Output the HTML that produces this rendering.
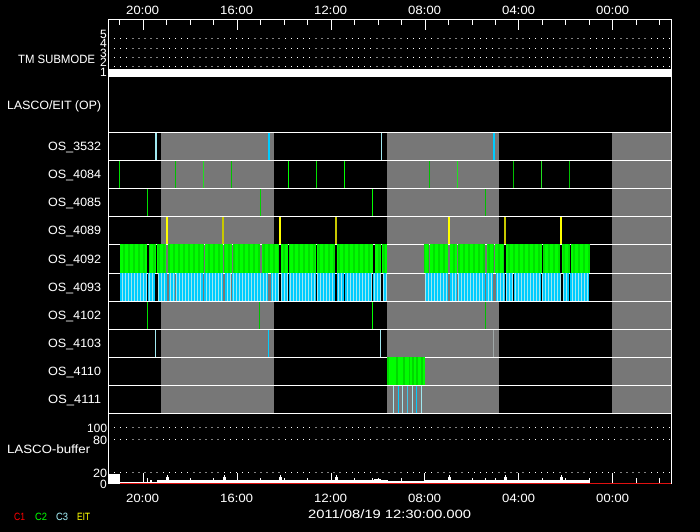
<!DOCTYPE html>
<html><head><meta charset="utf-8"><style>
html,body{margin:0;padding:0;background:#000;width:700px;height:532px;overflow:hidden}
svg{display:block}
text{font-family:"Liberation Sans",sans-serif;font-size:12px;fill:#fff}
</style></head><body>
<svg width="700" height="532" viewBox="0 0 700 532" shape-rendering="crispEdges">
<defs>
<pattern id="g" width="5" height="10" patternUnits="userSpaceOnUse"><rect width="5" height="10" fill="#00ff00"/><rect x="3" width="2" height="10" fill="#00e000"/></pattern>
<pattern id="c" width="3" height="10" patternUnits="userSpaceOnUse"><rect width="3" height="10" fill="#00ccff"/><rect x="2" width="1" height="10" fill="#a0e8f0"/></pattern>
</defs>
<rect width="700" height="532" fill="#000"/>

<!-- gray bands -->
<g fill="#777">
<rect x="161" y="133" width="113" height="280"/>
<rect x="387" y="133" width="112" height="280"/>
<rect x="612" y="133" width="59" height="280"/>
</g>

<!-- row lines -->
<g fill="#fff">
<rect x="108" y="132" width="564" height="1"/>
<rect x="108" y="160" width="564" height="1"/>
<rect x="108" y="188" width="564" height="1"/>
<rect x="108" y="216" width="564" height="1"/>
<rect x="108" y="244" width="564" height="1"/>
<rect x="108" y="273" width="564" height="1"/>
<rect x="108" y="301" width="564" height="1"/>
<rect x="108" y="329" width="564" height="1"/>
<rect x="108" y="357" width="564" height="1"/>
<rect x="108" y="385" width="564" height="1"/>
<rect x="108" y="413" width="564" height="1"/>
<rect x="109" y="69" width="562" height="8"/>
</g>

<!-- OS_3532 -->
<rect x="155" y="133" width="2" height="27" fill="#a0e8f0"/>
<rect x="268" y="133" width="2" height="27" fill="#00ccff"/>
<rect x="381" y="133" width="1" height="27" fill="#a0e8f0"/>
<rect x="493" y="133" width="2" height="27" fill="#00ccff"/>

<!-- OS_4084 -->
<g fill="#00e000">
<rect x="119" y="161" width="1" height="27"/>
<rect x="175" y="161" width="1" height="27" fill="#00c000"/>
<rect x="203" y="161" width="1" height="27" fill="#20e020"/>
<rect x="231" y="161" width="1" height="27" fill="#00c000"/>
<rect x="288" y="161" width="1" height="27" fill="#00ff00"/>
<rect x="316" y="161" width="1" height="27"/>
<rect x="344" y="161" width="1" height="27" fill="#00ff00"/>
<rect x="429" y="161" width="1" height="27" fill="#00c000"/>
<rect x="457" y="161" width="1" height="27" fill="#20e020"/>
<rect x="513" y="161" width="1" height="27" fill="#00c000"/>
<rect x="541" y="161" width="1" height="27" fill="#20e020"/>
<rect x="569" y="161" width="1" height="27" fill="#00c000"/>
</g>

<!-- OS_4085 -->
<g fill="#00e000">
<rect x="147" y="189" width="1" height="27"/>
<rect x="260" y="189" width="1" height="27" fill="#00d000"/>
<rect x="372" y="189" width="1" height="27" fill="#00ff00"/>
<rect x="485" y="189" width="1" height="27" fill="#00c000"/>
</g>

<!-- OS_4089 -->
<rect x="166" y="217" width="2" height="27" fill="#ffff00"/>
<rect x="222" y="217" width="2" height="27" fill="#c8c800"/>
<rect x="279" y="217" width="2" height="27" fill="#ffff00"/>
<rect x="335" y="217" width="2" height="27" fill="#c8c800"/>
<rect x="448" y="217" width="2" height="27" fill="#ffff00"/>
<rect x="504" y="217" width="2" height="27" fill="#c8c800"/>
<rect x="560" y="217" width="2" height="27" fill="#ffff00"/>

<!-- OS_4092 -->
<g fill="url(#g)">
<rect x="120" y="244" width="27" height="29"/><rect x="149" y="244" width="7" height="29"/><rect x="157" y="244" width="9" height="29"/><rect x="168" y="244" width="36" height="29"/><rect x="205" y="244" width="18" height="29"/><rect x="224" y="244" width="8" height="29"/><rect x="233" y="244" width="27" height="29"/><rect x="262" y="244" width="17" height="29"/><rect x="281" y="244" width="7" height="29"/><rect x="289" y="244" width="27" height="29"/><rect x="317" y="244" width="18" height="29"/><rect x="337" y="244" width="36" height="29"/><rect x="375" y="244" width="6" height="29"/><rect x="382" y="244" width="5" height="29"/>
<rect x="424" y="244" width="5" height="29"/><rect x="430" y="244" width="18" height="29"/><rect x="450" y="244" width="7" height="29"/><rect x="458" y="244" width="27" height="29"/><rect x="487" y="244" width="7" height="29"/><rect x="495" y="244" width="9" height="29"/><rect x="506" y="244" width="36" height="29"/><rect x="543" y="244" width="17" height="29"/><rect x="562" y="244" width="8" height="29"/><rect x="571" y="244" width="19" height="29"/>
</g>

<!-- OS_4093 -->
<g fill="url(#c)">
<rect x="120" y="273" width="27" height="28"/><rect x="148" y="273" width="7" height="28"/><rect x="158" y="273" width="9" height="28"/><rect x="169" y="273" width="6" height="28"/><rect x="176" y="273" width="27" height="28"/><rect x="204" y="273" width="19" height="28"/><rect x="225" y="273" width="6" height="28"/><rect x="232" y="273" width="36" height="28"/><rect x="271" y="273" width="8" height="28"/><rect x="281" y="273" width="7" height="28"/><rect x="289" y="273" width="27" height="28"/><rect x="317" y="273" width="18" height="28"/><rect x="337" y="273" width="7" height="28"/><rect x="345" y="273" width="27" height="28"/><rect x="373" y="273" width="8" height="28"/><rect x="383" y="273" width="4" height="28"/>
<rect x="425" y="273" width="23" height="28"/><rect x="450" y="273" width="7" height="28"/><rect x="458" y="273" width="27" height="28"/><rect x="486" y="273" width="7" height="28"/><rect x="496" y="273" width="9" height="28"/><rect x="506" y="273" width="7" height="28"/><rect x="514" y="273" width="27" height="28"/><rect x="542" y="273" width="19" height="28"/><rect x="563" y="273" width="6" height="28"/><rect x="570" y="273" width="19" height="28"/>
</g>

<!-- OS_4102 -->
<g fill="#00e000">
<rect x="147" y="302" width="1" height="27"/>
<rect x="259" y="302" width="1" height="27" fill="#00c000"/>
<rect x="372" y="302" width="1" height="27" fill="#00ff00"/>
<rect x="485" y="302" width="1" height="27" fill="#00c000"/>
</g>

<!-- OS_4103 -->
<rect x="155" y="330" width="1" height="27" fill="#a0e8f0"/>
<rect x="268" y="330" width="1" height="27" fill="#00ccff"/>
<rect x="380" y="330" width="1" height="27" fill="#a0e8f0"/>
<rect x="493" y="330" width="1" height="27" fill="#a0a8a8"/>

<!-- OS_4110 -->
<rect x="387" y="357" width="38" height="28" fill="#00ff00"/>
<g fill="#00d800">
<rect x="387" y="357" width="2" height="28"/><rect x="396" y="357" width="2" height="28"/><rect x="403" y="357" width="2" height="28"/><rect x="409" y="357" width="1" height="28"/><rect x="412" y="357" width="2" height="28"/><rect x="416" y="357" width="2" height="28"/><rect x="421" y="357" width="2" height="28"/>
</g>

<!-- OS_4111 -->
<rect x="393" y="386" width="1" height="27" fill="#a0e8f0"/>
<rect x="398" y="386" width="1" height="27" fill="#00ccff"/>
<rect x="402" y="386" width="1" height="27" fill="#a0e8f0"/>
<rect x="407" y="386" width="1" height="27" fill="#40c8e8"/>
<rect x="412" y="386" width="1" height="27" fill="#a0e8f0"/>
<rect x="416" y="386" width="1" height="27" fill="#00ccff"/>
<rect x="421" y="386" width="1" height="27" fill="#a0e8f0"/>

<!-- dotted grids -->
<g stroke="#fff" stroke-width="1" stroke-dasharray="1 5.1" fill="none">
<line x1="114" y1="38.5" x2="670" y2="38.5"/>
<line x1="114" y1="48.5" x2="670" y2="48.5"/>
<line x1="114" y1="57.5" x2="670" y2="57.5"/>
<line x1="114" y1="66.5" x2="670" y2="66.5"/>
<line x1="114" y1="427.5" x2="670" y2="427.5"/>
<line x1="114" y1="439.5" x2="670" y2="439.5"/>
<line x1="114" y1="472.5" x2="670" y2="472.5"/>
</g>

<!-- buffer -->
<g fill="#fff">
<rect x="109" y="474" width="11" height="9"/>
<rect x="120" y="482" width="37" height="1"/>
<rect x="157" y="480" width="230" height="3"/>
<rect x="387" y="481" width="38" height="2"/>
<rect x="425" y="480" width="165" height="3"/>
<rect x="374" y="479" width="7" height="4"/><rect x="385" y="480" width="3" height="3"/>
<rect x="166" y="477" width="3" height="6"/><rect x="167" y="475" width="1" height="8"/>
<rect x="223" y="477" width="3" height="6"/><rect x="224" y="475" width="1" height="8"/>
<rect x="279" y="477" width="3" height="6"/><rect x="280" y="475" width="1" height="8"/>
<rect x="335" y="477" width="3" height="6"/><rect x="336" y="475" width="1" height="8"/>
<rect x="448" y="477" width="3" height="6"/><rect x="449" y="475" width="1" height="8"/>
<rect x="504" y="477" width="3" height="6"/><rect x="505" y="475" width="1" height="8"/>
<rect x="560" y="477" width="3" height="6"/><rect x="561" y="475" width="1" height="8"/>
<rect x="147" y="478" width="1" height="5"/><rect x="150" y="480" width="2" height="3"/>
<rect x="260" y="478" width="1" height="5"/><rect x="372" y="478" width="1" height="5"/><rect x="485" y="478" width="1" height="5"/>
</g>
<rect x="120" y="483" width="552" height="1" fill="#e01010"/>
<rect x="108" y="483" width="12" height="1" fill="#fff"/>

<!-- axes -->
<g fill="#fff">
<rect x="108" y="19" width="564" height="1"/>
<rect x="108" y="19" width="1" height="465"/>
<rect x="671" y="19" width="1" height="465"/>
<rect x="143" y="19" width="1" height="11"/><rect x="237" y="19" width="1" height="11"/><rect x="331" y="19" width="1" height="11"/><rect x="425" y="19" width="1" height="11"/><rect x="518" y="19" width="1" height="11"/><rect x="612" y="19" width="1" height="11"/>
<rect x="119" y="19" width="1" height="6"/><rect x="166" y="19" width="1" height="6"/><rect x="190" y="19" width="1" height="6"/><rect x="213" y="19" width="1" height="6"/><rect x="260" y="19" width="1" height="6"/><rect x="284" y="19" width="1" height="6"/><rect x="307" y="19" width="1" height="6"/><rect x="354" y="19" width="1" height="6"/><rect x="378" y="19" width="1" height="6"/><rect x="401" y="19" width="1" height="6"/><rect x="448" y="19" width="1" height="6"/><rect x="472" y="19" width="1" height="6"/><rect x="495" y="19" width="1" height="6"/><rect x="542" y="19" width="1" height="6"/><rect x="565" y="19" width="1" height="6"/><rect x="589" y="19" width="1" height="6"/><rect x="636" y="19" width="1" height="6"/><rect x="659" y="19" width="1" height="6"/>
<rect x="143" y="473" width="1" height="10"/><rect x="237" y="473" width="1" height="10"/><rect x="331" y="473" width="1" height="10"/><rect x="424" y="473" width="1" height="10"/><rect x="518" y="473" width="1" height="10"/><rect x="612" y="473" width="1" height="10"/>
<rect x="119" y="478" width="1" height="5"/><rect x="190" y="478" width="1" height="5"/><rect x="213" y="478" width="1" height="5"/><rect x="284" y="478" width="1" height="5"/><rect x="307" y="478" width="1" height="5"/><rect x="354" y="478" width="1" height="5"/><rect x="378" y="478" width="1" height="5"/><rect x="401" y="478" width="1" height="5"/><rect x="472" y="478" width="1" height="5"/><rect x="495" y="478" width="1" height="5"/><rect x="542" y="478" width="1" height="5"/><rect x="565" y="478" width="1" height="5"/><rect x="589" y="478" width="1" height="5"/><rect x="636" y="478" width="1" height="5"/><rect x="659" y="478" width="1" height="5"/>
</g>

<!-- text -->
<g shape-rendering="auto" text-rendering="geometricPrecision">
<text x="126" y="14" textLength="33" lengthAdjust="spacingAndGlyphs">20:00</text>
<text x="220" y="14" textLength="33" lengthAdjust="spacingAndGlyphs">16:00</text>
<text x="314" y="14" textLength="33" lengthAdjust="spacingAndGlyphs">12:00</text>
<text x="408" y="14" textLength="33" lengthAdjust="spacingAndGlyphs">08:00</text>
<text x="502" y="14" textLength="33" lengthAdjust="spacingAndGlyphs">04:00</text>
<text x="596" y="14" textLength="33" lengthAdjust="spacingAndGlyphs">00:00</text>
<text x="126" y="502" textLength="33" lengthAdjust="spacingAndGlyphs">20:00</text>
<text x="220" y="502" textLength="33" lengthAdjust="spacingAndGlyphs">16:00</text>
<text x="314" y="502" textLength="33" lengthAdjust="spacingAndGlyphs">12:00</text>
<text x="408" y="502" textLength="33" lengthAdjust="spacingAndGlyphs">08:00</text>
<text x="502" y="502" textLength="33" lengthAdjust="spacingAndGlyphs">04:00</text>
<text x="596" y="502" textLength="33" lengthAdjust="spacingAndGlyphs">00:00</text>
<text x="308" y="518" textLength="163" lengthAdjust="spacingAndGlyphs">2011/08/19 12:30:00.000</text>

<text x="18" y="63" textLength="77" lengthAdjust="spacingAndGlyphs">TM SUBMODE</text>
<text x="7" y="109" textLength="94" lengthAdjust="spacingAndGlyphs">LASCO/EIT (OP)</text>
<g style="font-size:11.5px">
<text x="100" y="38">5</text><text x="100" y="47">4</text><text x="100" y="57">3</text><text x="100" y="66">2</text><text x="100" y="76">1</text>
</g>

<text x="48" y="150" textLength="53" lengthAdjust="spacingAndGlyphs">OS_3532</text>
<text x="48" y="178" textLength="53" lengthAdjust="spacingAndGlyphs">OS_4084</text>
<text x="48" y="206" textLength="53" lengthAdjust="spacingAndGlyphs">OS_4085</text>
<text x="48" y="234" textLength="53" lengthAdjust="spacingAndGlyphs">OS_4089</text>
<text x="48" y="263" textLength="53" lengthAdjust="spacingAndGlyphs">OS_4092</text>
<text x="48" y="291" textLength="53" lengthAdjust="spacingAndGlyphs">OS_4093</text>
<text x="48" y="319" textLength="53" lengthAdjust="spacingAndGlyphs">OS_4102</text>
<text x="48" y="347" textLength="53" lengthAdjust="spacingAndGlyphs">OS_4103</text>
<text x="48" y="375" textLength="53" lengthAdjust="spacingAndGlyphs">OS_4110</text>
<text x="48" y="403" textLength="53" lengthAdjust="spacingAndGlyphs">OS_4111</text>

<text x="87" y="432" textLength="20" lengthAdjust="spacingAndGlyphs">100</text>
<text x="93" y="444" textLength="14" lengthAdjust="spacingAndGlyphs">80</text>
<text x="93" y="477" textLength="14" lengthAdjust="spacingAndGlyphs">20</text>
<text x="100" y="488">0</text>
<text x="7" y="453" textLength="83" lengthAdjust="spacingAndGlyphs">LASCO-buffer</text>

<text x="14" y="520" style="font-size:10.5px;fill:#ff0000" textLength="11" lengthAdjust="spacingAndGlyphs">C1</text>
<text x="35" y="520" style="font-size:10.5px;fill:#00ff00" textLength="12" lengthAdjust="spacingAndGlyphs">C2</text>
<text x="56" y="520" style="font-size:10.5px;fill:#a0e8f0" textLength="12" lengthAdjust="spacingAndGlyphs">C3</text>
<text x="77" y="520" style="font-size:10.5px;fill:#ffff00" textLength="13" lengthAdjust="spacingAndGlyphs">EIT</text>
</g>
</svg>
</body></html>
